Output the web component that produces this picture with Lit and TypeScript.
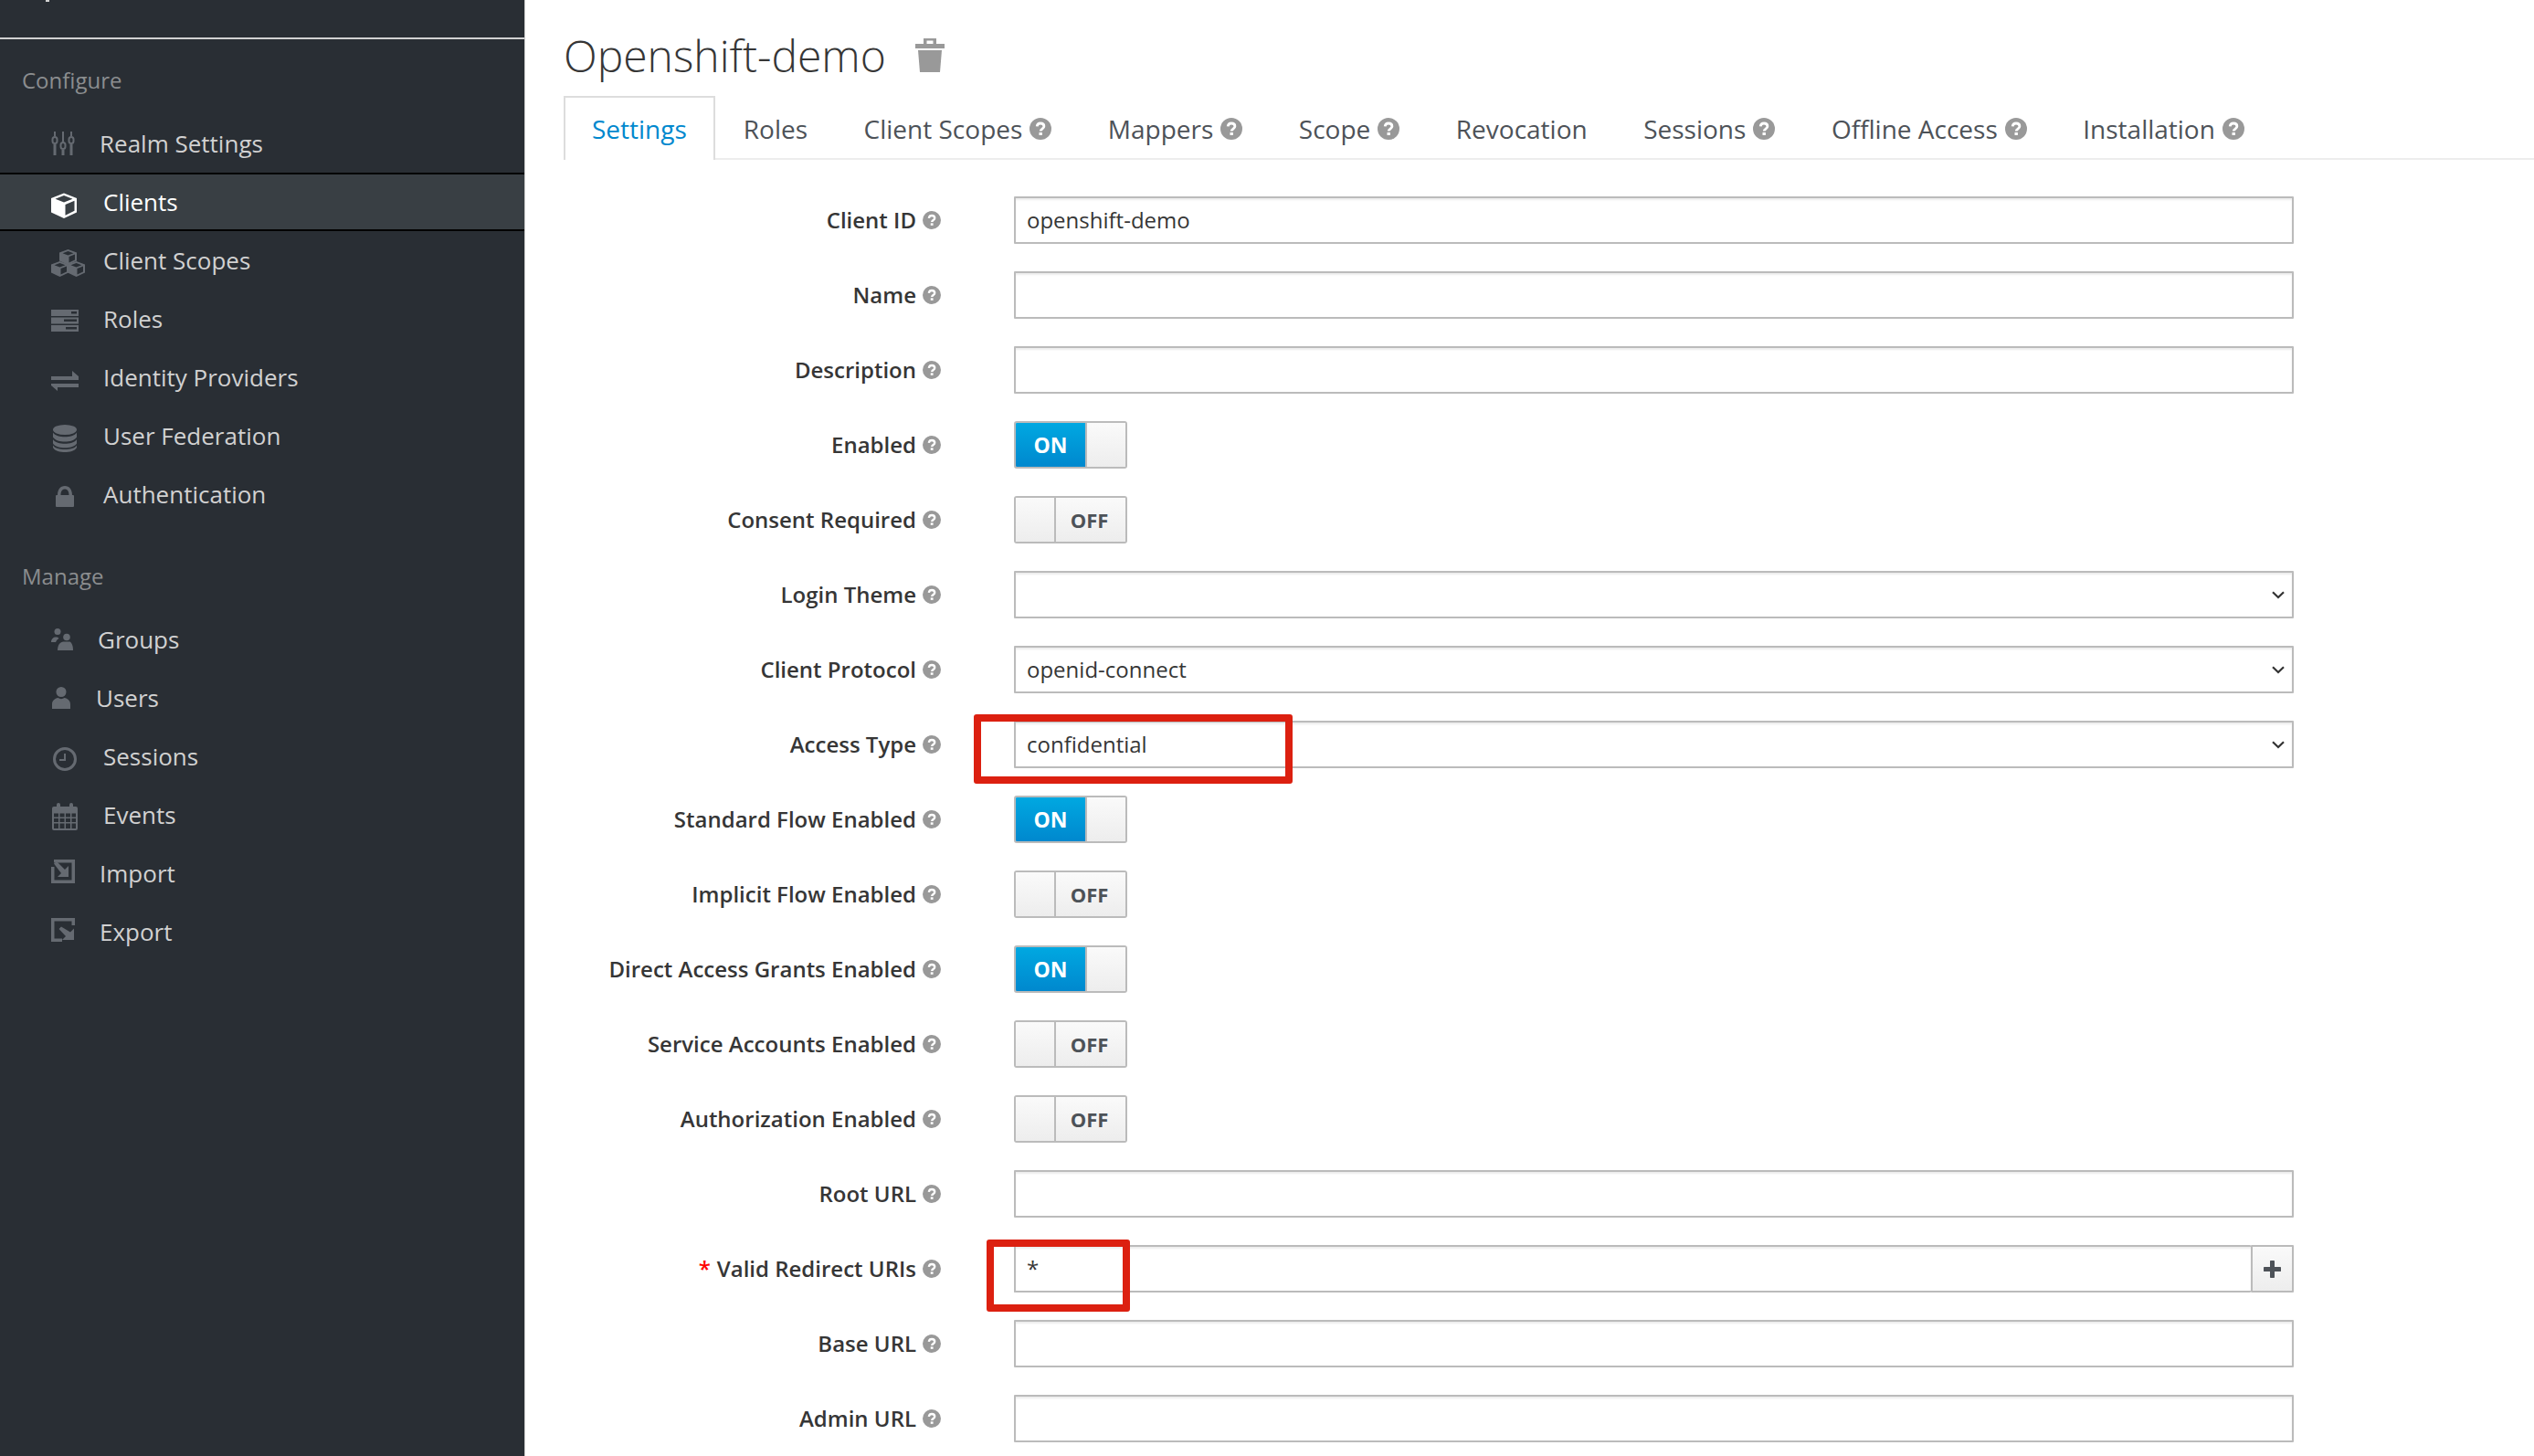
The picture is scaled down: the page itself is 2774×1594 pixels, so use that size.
import { LitElement, css, html, svg } from "lit";
import { customElement } from "lit/decorators.js";

const smallCube = svg`
  <path d="M9.500 0 19 3.500v9L9.500 17 0 12.500v-9z"/>
  <path fill="#292e34" d="M9.500 2 15.500 4.200 9.500 6.500 3.500 4.200zM10.500 8 17 5.500v6l-6.500 3z"/>`;

const ICONS: Record<string, any> = {
  sliders: svg`
    <path d="M3 0h2v5H3zM12 0h2v12h-2zM21 0h2v5h-2z"/>
    <path d="M2.500 14h3v12h-3zM11.500 20h3v6h-3zM20.500 14h3v12h-3z"/>
    <g fill="none" stroke="currentColor" stroke-width="2"><rect x="1.500" y="6" width="5" height="7" rx="2.500"/><rect x="10.500" y="12" width="5" height="7" rx="2.500"/><rect x="19.500" y="6" width="5" height="7" rx="2.500"/></g>`,
  cube: svg`
    <path d="M14 0.500 28 6v15.500L14 28 0 21.500V6z"/>
    <path fill="#393f44" d="M14 3 23.500 6.700 14 10.600 4.500 6.700zM15.500 13 25.500 8.800v11L15.500 24.800z"/>`,
  cubes: svg`
    <g transform="translate(9 0)">${smallCube}</g>
    <g transform="translate(0 13)">${smallCube}</g>
    <g transform="translate(18 13)">${smallCube}</g>`,
  server: svg`
    <path fill-rule="evenodd" d="M0 0h30v7H0zM22 2v2.500h6V2zM0 8.500h30v7H0zM14 10.500v2.500h14v-2.500zM0 17h30v7H0zM16 19v2.500h12V19z"/>`,
  exchange: svg`
    <path d="M0 6h23V0l7 6v4H0zM0 14h30v4H7v4l-7-6z"/>`,
  database: svg`
    <ellipse cx="13" cy="5.500" rx="13" ry="5.500"/>
    <path d="M0 8.500C2 12 8 13.300 13 13.300S24 12 26 8.500v5C24 17.200 18 18.500 13 18.500S2 17.200 0 13.500z"/>
    <path d="M0 16C2 19.500 8 20.800 13 20.800S24 19.500 26 16v4.500C24 24 18 25.300 13 25.300S2 24 0 20.500z"/>
    <path d="M0 22.500C2 26 8 27 13 27S24 26 26 22.500V25C24 28.800 18 30 13 30S2 28.800 0 25z"/>`,
  lock: svg`
    <path fill-rule="evenodd" d="M2 10C2 4 5 0 10 0s8 4 8 10h1a1 1 0 0 1 1 1v11a1 1 0 0 1-1 1H1a1 1 0 0 1-1-1V11a1 1 0 0 1 1-1zM5.500 10h9c0-4-1.500-6.500-4.500-6.500S5.500 6 5.500 10z"/>`,
  group: svg`
    <circle cx="7" cy="3.500" r="3.500"/>
    <circle cx="17" cy="9.500" r="3.800"/>
    <path d="M0 15c0-3.500 2.500-5.500 5-5.500 1.600 0 2.700.5 3.500 1.400C6.800 12 5.500 13.300 5 15z"/>
    <path d="M7 24c0-6 3-9.500 6.500-9.500h7c2 1 3.500 4.500 3.500 9.500z"/>`,
  user: svg`
    <circle cx="10" cy="5.500" r="5.500"/>
    <path d="M0 24v-5c0-4 3-6.500 6.500-7 2 1.500 5 1.500 7 0 3.500.5 6.500 3 6.500 7v5z"/>`,
  clock: svg`
    <path fill-rule="evenodd" d="M13 0a13 13 0 1 1 0 26a13 13 0 0 1 0-26zM13 3a10 10 0 1 0 0 20a10 10 0 0 0 0-20z"/>
    <path d="M12 7h2v8H7v-2h5z"/>`,
  calendar: svg`
    <path fill-rule="evenodd" d="M2 4h3V2a2 2 0 0 1 4 0v2h10V2a2 2 0 0 1 4 0v2h3a2 2 0 0 1 2 2v22a2 2 0 0 1-2 2H2a2 2 0 0 1-2-2V6a2 2 0 0 1 2-2zM2 11.500v4h5v-4zM8.500 11.500v4h5v-4zM15 11.500v4h5v-4zM21.500 11.500v4H26v-4zM2 17v4h5v-4zM8.500 17v4h5v-4zM15 17v4h5v-4zM21.500 17v4H26v-4zM2 22.500V28h5v-5.500zM8.500 22.500V28h5v-5.500zM15 22.500V28h5v-5.500zM21.500 22.500V28H26v-5.500z"/>`,
  import: svg`
    <path d="M3 0h23v26H0V8h3.500v14.500h19v-19H3z"/>
    <path d="M3 4.500 6 2 15 11l4-4v12H7l4-4z"/>`,
  export: svg`
    <path d="M0 0h26v8h-3.500V3.500h-19v19H12V26H0z"/>
    <path d="M11 9.500 8.500 12 16 20l-4 4h13V11.500l-4 4z"/>`,
};

const NAV = [
  {
    title: "Configure",
    items: [
      { label: "Realm Settings", icon: "sliders", w: 26, h: 26, text: 109, left: 56, dy: 0 },
      { label: "Clients", icon: "cube", w: 28, h: 28, text: 113, left: 56, dy: 4, active: true },
      { label: "Client Scopes", icon: "cubes", w: 37, h: 30, text: 113, left: 56, dy: 3 },
      { label: "Roles", icon: "server", w: 30, h: 24, text: 113, left: 56, dy: 2 },
      { label: "Identity Providers", icon: "exchange", w: 30, h: 22, text: 113, left: 56, dy: 4 },
      { label: "User Federation", icon: "database", w: 26, h: 30, text: 113, left: 58, dy: 3 },
      { label: "Authentication", icon: "lock", w: 20, h: 23, text: 113, left: 61, dy: 2 },
    ],
  },
  {
    title: "Manage",
    items: [
      { label: "Groups", icon: "group", w: 24, h: 24, text: 107, left: 56, dy: 0 },
      { label: "Users", icon: "user", w: 20, h: 24, text: 105, left: 57, dy: 0 },
      { label: "Sessions", icon: "clock", w: 26, h: 26, text: 113, left: 58, dy: 3 },
      { label: "Events", icon: "calendar", w: 28, h: 30, text: 113, left: 57, dy: 2 },
      { label: "Import", icon: "import", w: 26, h: 26, text: 109, left: 56, dy: -2 },
      { label: "Export", icon: "export", w: 26, h: 26, text: 109, left: 56, dy: -2 },
    ],
  },
];

const TABS = [
  { label: "Settings", active: true },
  { label: "Roles" },
  { label: "Client Scopes", help: true },
  { label: "Mappers", help: true },
  { label: "Scope", help: true },
  { label: "Revocation" },
  { label: "Sessions", help: true },
  { label: "Offline Access", help: true },
  { label: "Installation", help: true },
];

const FIELDS = [
  { label: "Client ID", type: "input", value: "openshift-demo" },
  { label: "Name", type: "input" },
  { label: "Description", type: "input" },
  { label: "Enabled", type: "switch", on: true },
  { label: "Consent Required", type: "switch" },
  { label: "Login Theme", type: "select" },
  { label: "Client Protocol", type: "select", value: "openid-connect" },
  { label: "Access Type", type: "select", value: "confidential" },
  { label: "Standard Flow Enabled", type: "switch", on: true },
  { label: "Implicit Flow Enabled", type: "switch" },
  { label: "Direct Access Grants Enabled", type: "switch", on: true },
  { label: "Service Accounts Enabled", type: "switch" },
  { label: "Authorization Enabled", type: "switch" },
  { label: "Root URL", type: "input" },
  { label: "Valid Redirect URIs", type: "multi", value: "*", required: true },
  { label: "Base URL", type: "input" },
  { label: "Admin URL", type: "input" },
];

@customElement("app-root")
export class AppRoot extends LitElement {
  _help(size: number) {
    return html`<svg class="help" width=${size} height=${size} viewBox="0 0 24 24">
      <circle cx="12" cy="12" r="12" fill="#999"></circle>
      <path d="M8.200 9.400C8.400 7 10 6 12 6c2.300 0 3.900 1.300 3.900 3.200 0 2.800-3.700 2.800-3.700 5.300" fill="none" stroke="#fff" stroke-width="2.800"></path>
      <rect x="10.500" y="16" width="3.400" height="3" fill="#fff"></rect>
    </svg>`;
  }

  _navItem(item: any) {
    return html`<li class="item ${item.active ? "active" : ""}">
      <span class="slot" style="width:${item.text - item.left}px;margin-left:${item.left}px">
        <svg style="transform:translateY(${item.dy}px)" width=${item.w} height=${item.h} viewBox="0 0 ${item.w} ${item.h}" fill="currentColor">${ICONS[item.icon]}</svg>
      </span>
      <span>${item.label}</span>
    </li>`;
  }

  _control(field: any) {
    if (field.type === "switch") {
      return html`<div class="switch ${field.on ? "on" : "off"}">
        ${field.on
          ? html`<span class="state">ON</span><span class="handle"></span>`
          : html`<span class="handle"></span><span class="state">OFF</span>`}
      </div>`;
    }
    if (field.type === "select") {
      return html`<div class="select">
        <select class="input">
          <option>${field.value ?? ""}</option>
        </select>
        <svg class="chevron" width="14" height="9" viewBox="0 0 14 9">
          <path d="M1 1.200 7 7 13 1.200" fill="none" stroke="#333" stroke-width="2.200"></path>
        </svg>
      </div>`;
    }
    if (field.type === "multi") {
      return html`<div class="multi">
        <input class="input" .value=${field.value} />
        <button class="add">
          <svg width="19" height="19" viewBox="0 0 19 19"><path d="M9.500 1.500v16M1.500 9.500h16" stroke="#4d5258" stroke-width="5" stroke-linecap="round"></path></svg>
        </button>
      </div>`;
    }
    return html`<input class="input" .value=${field.value ?? ""} />`;
  }

  render() {
    return html`
      <aside class="sidebar">
        <div class="realm"><span class="realm-cut"></span></div>
        ${NAV.map(
          (group) => html`
            <h2 class="group-title">${group.title}</h2>
            <ul class="nav">
              ${group.items.map((item) => this._navItem(item))}
            </ul>
          `
        )}
      </aside>
      <main class="main">
        <header class="heading">
          <h1>Openshift-demo</h1>
          <svg class="trash" width="32" height="37" viewBox="0 0 32 37" fill="#999">
            <path fill-rule="evenodd" d="M9 6V0h14v6h9v5H0V6zM12.500 2.500V6h7V2.500z"></path>
            <path d="M3 13h26l-2 24H5z"></path>
          </svg>
        </header>
        <nav class="tabs">
          ${TABS.map(
            (tab) => html`<a class="tab ${tab.active ? "active" : ""}">
              ${tab.label}${tab.help ? this._help(24) : ""}
            </a>`
          )}
        </nav>
        <form class="form">
          ${FIELDS.map(
            (field) => html`
              <label class="label">
                ${field.required ? html`<span class="req">*</span>` : ""}
                <span>${field.label}</span>${this._help(20)}
              </label>
              <div class="control">${this._control(field)}</div>
            `
          )}
        </form>
      </main>
      <div class="mark first"></div>
      <div class="mark second"></div>
    `;
  }

  static styles = css`
    :host {
      display: flex;
      position: relative;
      width: 100%;
      height: 1594px;
      overflow: hidden;
      background: #fff;
      font-family: "Open Sans", sans-serif;
      color: #363636;
    }
    .sidebar {
      box-sizing: border-box;
      flex: none;
      width: 575px;
      background: #292e34;
      border-right: 1px solid #c9c9c9;
      color: #d1d1d1;
      font-size: 26px;
    }
    .realm {
      height: 41px;
      border-bottom: 2px solid #d1d1d1;
    }
    .realm-cut {
      display: block;
      width: 4px;
      height: 2px;
      margin-left: 50px;
      background: #d1d1d1;
    }
    .group-title {
      margin: 0;
      padding-left: 24px;
      font-size: 24px;
      font-weight: 400;
      line-height: 34px;
      color: #8b8d8f;
    }
    .sidebar .group-title:first-of-type {
      margin-top: 28px;
    }
    .nav {
      list-style: none;
      margin: 20px 0 0;
      padding: 0 0 41px;
    }
    .item {
      box-sizing: border-box;
      display: flex;
      align-items: center;
      height: 64px;
      white-space: nowrap;
    }
    .item.active {
      color: #fff;
      background: #393f44;
      border-top: 2px solid #030303;
      border-bottom: 2px solid #030303;
    }
    .slot {
      display: flex;
      flex: none;
      color: #656a71;
    }
    .active .slot {
      color: #fff;
    }
    .main {
      flex: 1;
      min-width: 0;
      padding-left: 42px;
    }
    .heading {
      display: flex;
      align-items: center;
      gap: 32px;
      height: 105px;
      padding-top: 16px;
      box-sizing: border-box;
    }
    h1 {
      margin: 0;
      font-size: 48px;
      font-weight: 300;
      color: #363636;
      line-height: 1;
    }
    .tabs {
      display: flex;
      height: 70px;
      box-sizing: border-box;
      border-bottom: 2px solid #ededed;
      font-size: 28px;
      color: #4d5258;
    }
    .tab {
      box-sizing: border-box;
      display: flex;
      align-items: center;
      gap: 8px;
      height: 68px;
      padding: 3px 30.5px 0 31px;
      white-space: nowrap;
    }
    .tab.active {
      height: 70px;
      color: #0088ce;
      background: #fff;
      border: 2px solid #ddd;
      border-bottom: none;
      padding: 0 29px;
    }
    .help {
      flex: none;
      display: block;
    }
    .form {
      display: grid;
      grid-template-columns: 413px 1401px;
      grid-auto-rows: 52px;
      column-gap: 80px;
      row-gap: 30px;
      margin-top: 40px;
    }
    .label {
      display: flex;
      align-items: center;
      justify-content: flex-end;
      gap: 7px;
      padding-bottom: 1px;
      font-size: 24px;
      font-weight: 600;
      color: #363636;
      white-space: nowrap;
    }
    .req {
      color: #f00;
    }
    .input {
      box-sizing: border-box;
      display: block;
      width: 100%;
      height: 52px;
      padding: 0 12px 1px;
      margin: 0;
      border: 2px solid #bbb;
      border-radius: 1px;
      background: #fff;
      box-shadow: inset 0 2px 2px rgba(3, 3, 3, 0.075);
      font: 400 24px "Open Sans", sans-serif;
      color: #363636;
      outline: none;
      appearance: none;
    }
    .select {
      position: relative;
    }
    .chevron {
      position: absolute;
      right: 10px;
      top: 22px;
    }
    .multi {
      display: flex;
    }
    .multi .input {
      flex: 1;
      border-right: none;
    }
    .add {
      box-sizing: border-box;
      display: flex;
      align-items: center;
      justify-content: center;
      flex: none;
      width: 47px;
      height: 52px;
      padding: 0;
      border: 2px solid #bbb;
      border-radius: 1px;
      background: linear-gradient(#fafafa, #ededed);
    }
    .switch {
      box-sizing: border-box;
      display: flex;
      width: 124px;
      height: 52px;
      border: 2px solid #bbb;
      border-radius: 3px;
      overflow: hidden;
      font-size: 23px;
      font-weight: 700;
    }
    .state {
      display: flex;
      align-items: center;
      justify-content: center;
      flex: 1;
    }
    .on .state {
      color: #fff;
      background: linear-gradient(#00a8e1, #0088ce);
    }
    .off .state {
      color: #4d5258;
      font-size: 22px;
      padding-right: 3px;
      background: linear-gradient(#fafafa, #ededed);
    }
    .handle {
      box-sizing: border-box;
      flex: none;
      width: 44px;
      background: linear-gradient(#fafafa, #ededed);
    }
    .on .handle {
      border-left: 2px solid #bbb;
    }
    .off .handle {
      border-right: 2px solid #bbb;
    }
    .mark {
      position: absolute;
      box-sizing: border-box;
      border: 8px solid #dc2010;
      border-radius: 3px;
      pointer-events: none;
    }
    .mark.first {
      left: 1066px;
      top: 782px;
      width: 349px;
      height: 76px;
    }
    .mark.second {
      left: 1080px;
      top: 1357px;
      width: 157px;
      height: 79px;
    }
  `;
}
